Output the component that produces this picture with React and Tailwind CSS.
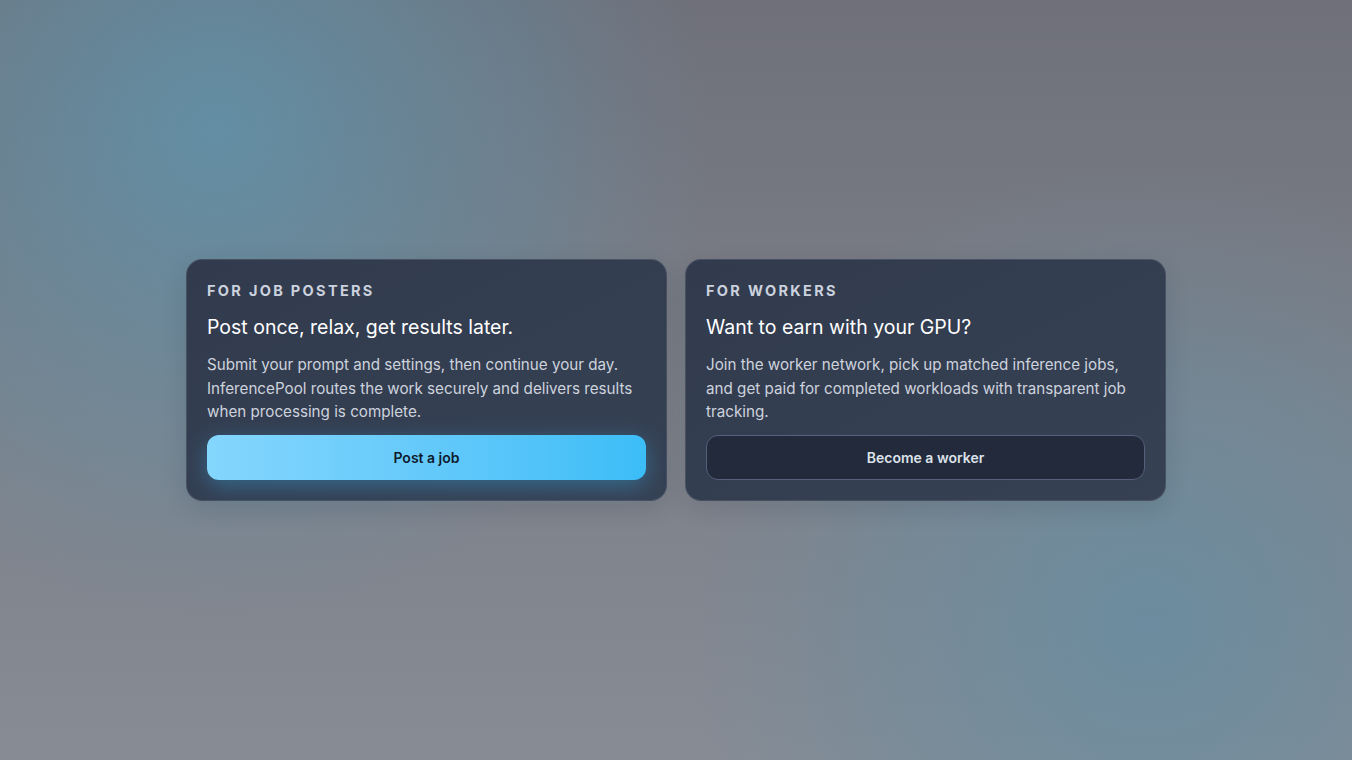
import React from "react";

const Card = ({ eyebrow, title, body, children }) => {
  return (
    <section className="flex flex-col rounded-2xl border border-white/10 px-5 pt-[21px] pb-5 shadow-[0_8px_24px_rgba(15,23,42,0.12)] bg-gradient-to-br from-[#323b4e] to-[#364154]">
      <p className="text-[14.5px] font-bold uppercase tracking-[0.16em] text-[#cbd2de] leading-5">
        {eyebrow}
      </p>
      <h2 className="mt-3 text-[19.5px] leading-7 text-white">{title}</h2>
      <p className="mt-3 text-[15.2px] leading-[23.5px] text-[#cdd3dd]">
        {body}
      </p>
      <div className="mt-[11px]">{children}</div>
    </section>
  );
};

const App = () => {
  return (
    <div
      className="relative flex h-[760px] w-full items-center justify-center overflow-hidden bg-[#7b7f88]"
      style={{
        fontFamily: "Inter, 'Noto Sans', sans-serif",
        backgroundImage:
          "radial-gradient(circle at 16% 17%, rgba(96,146,170,0.85) 0%, rgba(96,146,170,0) 38%), radial-gradient(circle at 85% 82%, rgba(104,142,162,0.85) 0%, rgba(104,142,162,0) 35%), linear-gradient(180deg, #6f7079 0%, #7d818a 55%, #868b94 100%)",
      }}
    >
      <div className="grid grid-cols-[481px_481px] gap-[18px]">
        <Card
          eyebrow="For job posters"
          title="Post once, relax, get results later."
          body="Submit your prompt and settings, then continue your day. InferencePool routes the work securely and delivers results when processing is complete."
        >
          <button className="h-[45px] w-full rounded-xl bg-gradient-to-r from-[#84d6fd] to-[#3bbdf7] text-[14px] font-semibold text-[#0f1b2d] shadow-[0_6px_22px_rgba(56,189,248,0.35)]">
            Post a job
          </button>
        </Card>
        <Card
          eyebrow="For workers"
          title="Want to earn with your GPU?"
          body="Join the worker network, pick up matched inference jobs, and get paid for completed workloads with transparent job tracking."
        >
          <button className="h-[45px] w-full rounded-xl border border-[#56607a] bg-[#222a3c] text-[14px] font-semibold text-[#dde2ea]">
            Become a worker
          </button>
        </Card>
      </div>
    </div>
  );
};

export default App;
